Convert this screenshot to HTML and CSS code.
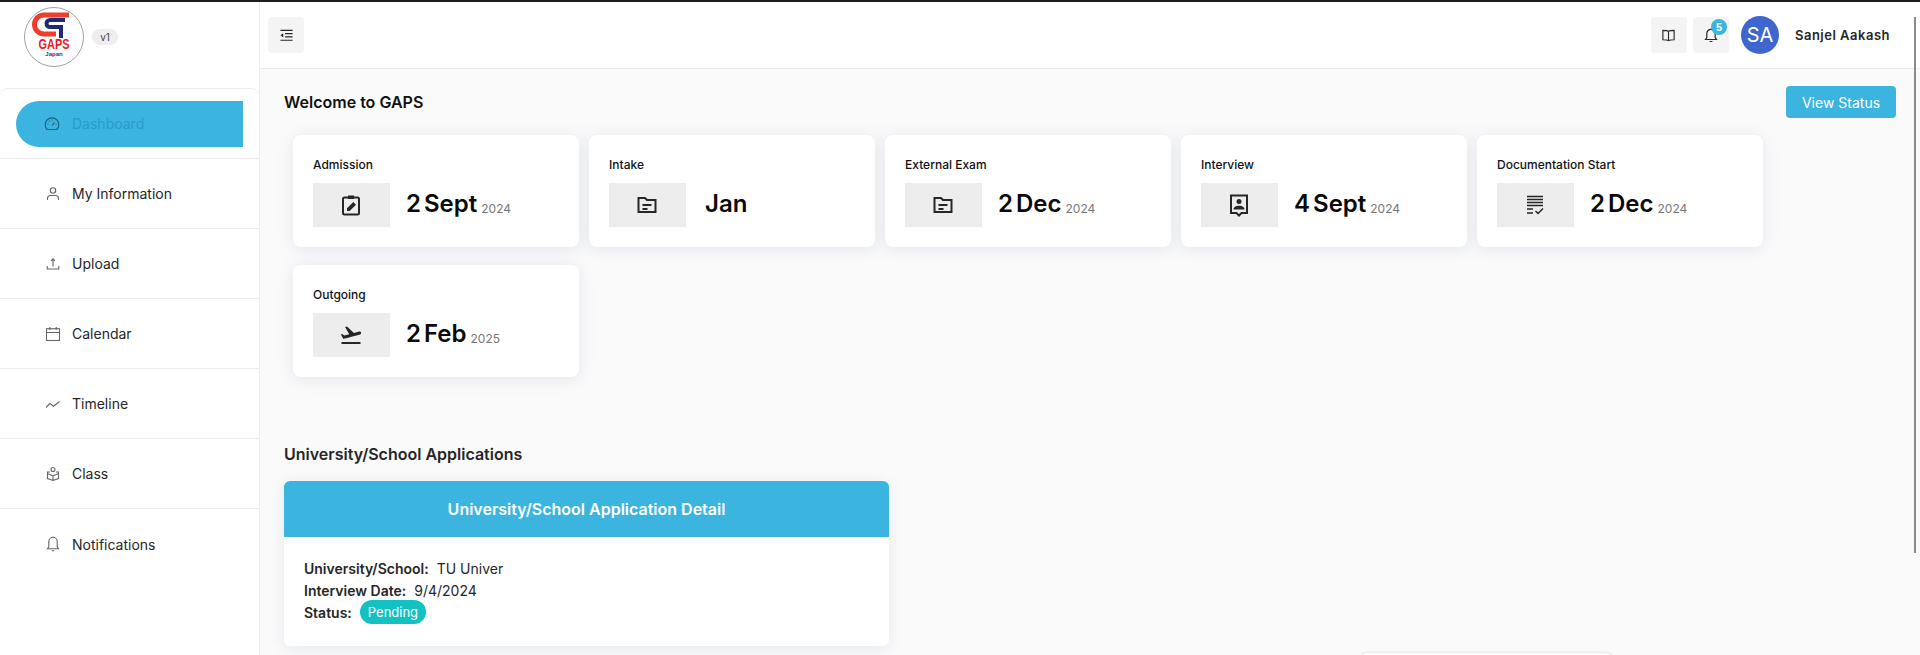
FILE: index.html
```html
<!DOCTYPE html>
<html lang="en">
<head>
  <meta charset="UTF-8"/>
  <meta name="viewport" content="width=device-width,initial-scale=1"/>
  <title>GAPS Dashboard</title>
  <link rel="stylesheet" href="styles.css">
</head>
<body>
  <div class="app">
    <aside class="sidebar">
      <div class="brand">
        <svg class="logo" viewBox="0 0 60 60">
          <circle cx="30" cy="30" r="29.5" fill="#fff" stroke="#8a8a8a" stroke-width="0.8"/>
          <path d="M45 8H20a9.500 9.500 0 0 0 0 19h12" fill="none" stroke="#ee3d2c" stroke-width="5"/>
          <path d="M41 13H26a3.500 3.500 0 0 0 0 7h11v11" fill="none" stroke="#1c2a78" stroke-width="4"/>
          <text x="14.500" y="42" textLength="31" lengthAdjust="spacingAndGlyphs" class="logo-name">GAPS</text>
          <text x="30" y="49" class="logo-sub">Japan</text>
        </svg>
        <span class="version">v1</span>
      </div>
      <nav class="menu">
        <a class="menu-item">
          <span class="menu-pill">
            <svg class="menu-icon" viewBox="0 0 16 16"><path d="M3.200 13.500a6.800 6.800 0 1 1 9.600 0z"/><path d="M8 9.500l2.500-3.200M3.500 8h1M11.500 8.500h1M5 5l.6.600M8 3.500v1"/></svg>
            <span class="menu-label">Dashboard</span>
          </span>
        </a>
        <a class="menu-item">
          <svg class="menu-icon" viewBox="0 0 16 16"><circle cx="8" cy="4.500" r="2.700"/><path d="M2.500 14v-1.500a3 3 0 0 1 3-3h5a3 3 0 0 1 3 3V14"/></svg>
          <span class="menu-label">My Information</span>
        </a>
        <a class="menu-item">
          <svg class="menu-icon" viewBox="0 0 16 16"><path d="M8 10.500V3M6 4.800L8 2.800l2 2M2.200 10v3h11.600v-3"/></svg>
          <span class="menu-label">Upload</span>
        </a>
        <a class="menu-item">
          <svg class="menu-icon" viewBox="0 0 16 16"><rect x="1.500" y="2.700" width="13" height="11.800"/><path d="M1.500 6.500h13M4.800 1v3M11.200 1v3"/></svg>
          <span class="menu-label">Calendar</span>
        </a>
        <a class="menu-item">
          <svg class="menu-icon" viewBox="0 0 16 16"><path d="M1 11.500l4-4 3.500 2.800L14.500 5.500"/></svg>
          <span class="menu-label">Timeline</span>
        </a>
        <a class="menu-item">
          <svg class="menu-icon" viewBox="0 0 16 16"><circle cx="8" cy="3.500" r="2"/><path d="M5 6H2.500v6.500L8 14.500l5.500-2V6H11M2.500 7.500L8 10l5.500-2.500M8 10v4.500"/></svg>
          <span class="menu-label">Class</span>
        </a>
        <a class="menu-item">
          <svg class="menu-icon" viewBox="0 0 16 16"><path d="M2.500 12.800h11l-1.300-2V5.500a4.200 4.200 0 0 0-8.400 0v5.300zM6.800 14.800h2.400M8 .6v.8"/></svg>
          <span class="menu-label">Notifications</span>
        </a>
      </nav>
    </aside>

    <div class="main">
      <header class="topbar">
        <button class="icon-btn">
          <svg viewBox="0 0 16 16"><path d="M1.500 2.500h13M6.500 6h8M6.500 9.500h8M1.500 13h13"/><path class="solid" d="M4.500 5.500v4.500L1.500 7.800z"/></svg>
        </button>
        <div class="topbar-right">
          <button class="icon-btn">
            <svg viewBox="0 0 16 16"><path d="M8 3.500C6.500 2.500 4 2.500 2 2.500v10c2 0 4.500 0 6 1 1.500-1 4-1 6-1v-10c-2 0-4.500 0-6 1zM8 3.500v10"/></svg>
          </button>
          <button class="icon-btn bell">
            <svg viewBox="0 0 16 16"><path d="M2.500 12.500h11l-1.300-2V6.500a4.200 4.200 0 0 0-8.400 0v4zM6.600 14.500h2.800"/></svg>
            <span class="badge">5</span>
          </button>
          <span class="avatar">SA</span>
          <span class="user-name">Sanjel Aakash</span>
        </div>
      </header>

      <main class="content">
        <div class="welcome">
          <h2 class="welcome-title">Welcome to GAPS</h2>
          <button class="status-btn">View Status</button>
        </div>

        <div class="cards">
          <div class="card">
            <div class="card-label">Admission</div>
            <div class="card-row">
              <span class="card-icon">
                <svg viewBox="0 0 24 24"><rect x="4" y="4.500" width="16" height="17" rx="1.500"/><path class="solid" d="M9 2.500h6v3.500H9zM8 18v-2.700l6.300-6.300 2.700 2.700L10.700 18z"/></svg>
              </span>
              <span class="card-date">2 Sept</span><span class="card-year">2024</span>
            </div>
          </div>
          <div class="card">
            <div class="card-label">Intake</div>
            <div class="card-row">
              <span class="card-icon">
                <svg viewBox="0 0 24 24"><path d="M3.500 5h6.500l2 2h8.500v12h-17z"/><path d="M7.500 12h9M7.500 16h5"/></svg>
              </span>
              <span class="card-date month-only">Jan</span>
            </div>
          </div>
          <div class="card">
            <div class="card-label">External Exam</div>
            <div class="card-row">
              <span class="card-icon">
                <svg viewBox="0 0 24 24"><path d="M3.500 5h6.500l2 2h8.500v12h-17z"/><path d="M7.500 12h9M7.500 16h5"/></svg>
              </span>
              <span class="card-date">2 Dec</span><span class="card-year">2024</span>
            </div>
          </div>
          <div class="card">
            <div class="card-label">Interview</div>
            <div class="card-row">
              <span class="card-icon">
                <svg viewBox="0 0 24 24"><path d="M4 2.500h16v17.500h-5.500L12 22.500 9.500 20H4z"/><circle class="solid" cx="12" cy="8.500" r="2.500"/><path class="solid" d="M6.500 16.500c0-2.500 2.500-3.700 5.500-3.700s5.500 1.200 5.500 3.700z"/></svg>
              </span>
              <span class="card-date">4 Sept</span><span class="card-year">2024</span>
            </div>
          </div>
          <div class="card">
            <div class="card-label">Documentation Start</div>
            <div class="card-row">
              <span class="card-icon">
                <svg class="thin" viewBox="0 0 24 24"><path d="M4 3.500h16M4 6.500h16M4 9.500h16M4 12.500h16M4 16h6M4 20h6M12.500 18l2.500 2.500 5-5"/></svg>
              </span>
              <span class="card-date">2 Dec</span><span class="card-year">2024</span>
            </div>
          </div>
          <div class="card">
            <div class="card-label">Outgoing</div>
            <div class="card-row">
              <span class="card-icon">
                <svg viewBox="0 0 24 24"><path class="solid" d="M2.500 19h19v2h-19zm19.570-9.360c-.21-.8-1.040-1.280-1.840-1.060L14.920 10l-6.900-6.430-1.930.51 4.140 7.170-4.970 1.330-1.970-1.540-1.450.39 2.590 4.490s7.120-1.900 16.570-4.430c.81-.23 1.280-1.050 1.070-1.850z"/></svg>
              </span>
              <span class="card-date">2 Feb</span><span class="card-year">2025</span>
            </div>
          </div>
        </div>

        <h2 class="section-title">University/School Applications</h2>
        <div class="detail">
          <div class="detail-head">University/School Application Detail</div>
          <div class="detail-body">
            <div class="detail-line"><b>University/School:</b> <span>TU Univer</span></div>
            <div class="detail-line"><b>Interview Date:</b> <span>9/4/2024</span></div>
            <div class="detail-line"><b>Status:</b> <span class="pill">Pending</span></div>
          </div>
        </div>
        <div class="next-card"></div>
      </main>
    </div>
  </div>
  <div class="scroll-thumb"></div>
</body>
</html>
```

FILE: styles.css
```css
:root {
  --primary: #3bb4e0;
  --text: #262626;
  --border: #ececec;
  --bg: #fafafb;
}

* {
  box-sizing: border-box;
  margin: 0;
  padding: 0;
}

html, body {
  height: 100%;
  overflow: hidden;
}

body {
  font-family: Inter, 'Noto Sans', sans-serif;
  color: var(--text);
  background: var(--bg);
  border-top: 2px solid #1c1c22;
}

svg {
  display: block;
  fill: none;
  stroke: currentColor;
}

svg .solid {
  fill: currentColor;
  stroke: none;
}

.app {
  display: flex;
  height: 100%;
}

/* sidebar */
.sidebar {
  width: 260px;
  flex: none;
  background: #fff;
  border-right: 1px solid var(--border);
}

.brand {
  display: flex;
  align-items: center;
  gap: 8px;
  height: 86px;
  padding: 0 0 16px 24px;
}

.logo {
  width: 60px;
  height: 60px;
  flex: none;
}

.logo-name {
  font: 700 14px 'Liberation Sans', sans-serif;
  fill: #ee1c25;
  stroke: none;
}

.logo-sub {
  font: 700 6px 'Liberation Sans', sans-serif;
  fill: #2c3a8c;
  stroke: none;
  text-anchor: middle;
}

.version {
  width: 26px;
  height: 16px;
  border-radius: 8px;
  background: #eee;
  color: #444;
  font-size: 10px;
  line-height: 16px;
  text-align: center;
}

.menu {
  border-top: 1px solid var(--border);
  border-radius: 8px 8px 0 0;
}

.menu-item {
  display: flex;
  align-items: center;
  height: 70px;
  padding-left: 45px;
  border-bottom: 1px solid var(--border);
  color: var(--text);
  font-size: 14px;
}

.menu-item:last-child {
  border-bottom: none;
}

.menu-item:first-child {
  padding-left: 16px;
}

.menu-pill {
  display: flex;
  align-items: center;
  width: 227px;
  height: 46px;
  padding-left: 28px;
  background: var(--primary);
  border-radius: 23px 0 0 23px;
  color: #2a9ccb;
}

.menu-pill .menu-icon {
  margin-right: 12px;
  color: #1d5f7d;
}

.menu-icon {
  width: 16px;
  height: 16px;
  margin-right: 11px;
  flex: none;
  color: #666;
  stroke-width: 1.100;
}

/* top bar */
.main {
  flex: 1;
  min-width: 0;
  display: flex;
  flex-direction: column;
}

.topbar {
  display: flex;
  align-items: center;
  justify-content: space-between;
  height: 67px;
  flex: none;
  padding: 0 30px 0 8px;
  background: #fff;
  border-bottom: 1px solid var(--border);
}

.topbar-right {
  display: flex;
  align-items: center;
  gap: 6px;
}

.icon-btn {
  position: relative;
  display: flex;
  align-items: center;
  justify-content: center;
  width: 36px;
  height: 36px;
  border: none;
  border-radius: 4px;
  background: #f4f4f4;
  color: #262626;
}

.icon-btn svg {
  width: 15px;
  height: 15px;
  stroke-width: 1.200;
}

.bell svg {
  width: 16px;
  height: 16px;
}

.badge {
  position: absolute;
  top: 2px;
  right: 2px;
  width: 16px;
  height: 16px;
  border-radius: 50%;
  background: var(--primary);
  color: #fff;
  font-size: 11px;
  font-weight: 600;
  line-height: 16px;
  text-align: center;
}

.avatar {
  width: 38px;
  height: 38px;
  margin-left: 6px;
  border-radius: 50%;
  background: #3f66cf;
  color: #fff;
  font-size: 20px;
  line-height: 38px;
  text-align: center;
}

.user-name {
  margin-left: 10px;
  font-size: 13px;
  font-weight: 600;
  letter-spacing: .5px;
}

/* content */
.content {
  flex: 1;
  position: relative;
  padding: 0 24px;
}

.welcome {
  display: flex;
  align-items: center;
  justify-content: space-between;
  height: 66px;
}

.welcome-title {
  font-size: 16px;
  font-weight: 600;
  color: #111;
}

.status-btn {
  width: 110px;
  height: 32px;
  border: none;
  border-radius: 4px;
  background: var(--primary);
  color: #fff;
  font: 400 14px Inter, sans-serif;
}

.cards {
  display: flex;
  flex-wrap: wrap;
  gap: 18px 10px;
  padding-left: 9px;
}

.card {
  width: 286px;
  height: 112px;
  padding: 20px;
  background: #fff;
  border-radius: 8px;
  box-shadow: 0 2px 16px rgba(145, 158, 171, .22);
}

.card-label {
  height: 20px;
  margin-bottom: 8px;
  color: #111;
  font-size: 12px;
  font-weight: 500;
  line-height: 20px;
}

.card-row {
  display: flex;
  align-items: center;
}

.card-icon {
  display: flex;
  align-items: center;
  justify-content: center;
  width: 77px;
  height: 44px;
  margin-right: 16px;
  padding-right: 2px;
  background: #ededed;
  color: #262626;
}

.card-icon svg {
  width: 24px;
  height: 24px;
  stroke-width: 2;
}

.card-icon svg.thin {
  stroke-width: 1.500;
}

.card-date {
  color: #0a0a0a;
  font-size: 24px;
  font-weight: 600;
  line-height: 30px;
  margin-top: -2px;
  word-spacing: -3px;
}

.month-only {
  margin-left: 3px;
}

.card-year {
  margin: 6px 0 0 4px;
  color: #777;
  font-size: 12px;
}

.section-title {
  margin-top: 65px;
  font-size: 16px;
  font-weight: 600;
  line-height: 24px;
}

.detail {
  width: 605px;
  height: 165px;
  margin-top: 15px;
  overflow: hidden;
  background: #fff;
  border-radius: 6px;
  box-shadow: 0 2px 16px rgba(145, 158, 171, .2);
}

.detail-head {
  height: 56px;
  background: var(--primary);
  color: #fff;
  font-size: 16px;
  font-weight: 600;
  line-height: 56px;
  text-align: center;
}

.detail-body {
  padding: 20px 20px 0;
  font-size: 14px;
}

.detail-line {
  display: flex;
  align-items: center;
  gap: 8px;
  height: 22px;
}

.detail-line b {
  font-weight: 600;
}

.pill {
  height: 24px;
  padding: 0 8px;
  border-radius: 12px;
  background: #12c2c2;
  color: #fff;
  font-size: 13px;
  line-height: 24px;
}

.next-card {
  position: absolute;
  left: 1101px;
  top: 584px;
  width: 251px;
  height: 20px;
  background: #fff;
  border-radius: 6px;
  box-shadow: 0 0 3px rgba(145, 158, 171, .4);
}

.scroll-thumb {
  position: fixed;
  top: 17px;
  right: 4px;
  width: 2px;
  height: 536px;
  background: #8a8a8a;
}
```
